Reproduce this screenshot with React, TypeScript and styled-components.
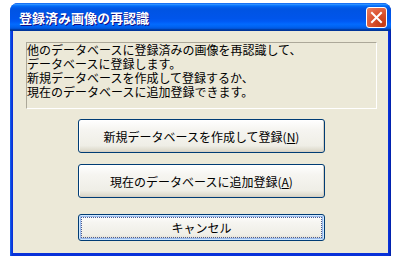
import React from "react";
import styled, { createGlobalStyle } from "styled-components";

const Global = createGlobalStyle`
  html, body { margin: 0; padding: 0; background: #ffffff; }
  body { width: 402px; height: 264px; overflow: hidden; }
`;

const FONT = `"MS UI Gothic", "Noto Sans CJK JP", "Noto Sans", sans-serif`;

const Page = styled.div`
  padding: 3px 0 0 10px;
`;

const Window = styled.div`
  width: 381px;
  height: 253px;
  display: flex;
  flex-direction: column;
  border-radius: 8px 8px 0 0;
  background: linear-gradient(to right, #166aee 0, #0831d9 2px, #0831d9 calc(100% - 2px), #001ea0 100%);
  box-sizing: border-box;
  overflow: hidden;
`;

const TitleBar = styled.div`
  height: 28px;
  flex: none;
  display: flex;
  align-items: center;
  justify-content: space-between;
  padding: 0 4px 0 9px;
  background: linear-gradient(
    to bottom,
    #0058ee 0%,
    #3593ff 4%,
    #288eff 6%,
    #127dff 8%,
    #036ffc 10%,
    #0262ee 14%,
    #0057e5 20%,
    #0054e3 24%,
    #0055eb 56%,
    #005bf5 66%,
    #026afe 76%,
    #0062ef 86%,
    #0052d6 92%,
    #0040ab 94%,
    #003092 100%
  );
`;

const Title = styled.span`
  font-family: ${FONT};
  font-size: 13px;
  font-weight: bold;
  color: #ffffff;
  letter-spacing: 0;
  text-shadow: 1px 1px 0 #0f1089;
  line-height: 1;
  margin-top: 1px;
`;

const CloseButton = styled.div`
  width: 21px;
  height: 21px;
  box-sizing: border-box;
  border: 1px solid #ffffff;
  border-radius: 3px;
  background: radial-gradient(
    circle at 80% 85%,
    #c23a14 0%,
    #d9502c 45%,
    #e46a4a 75%,
    #e98060 100%
  );
  display: flex;
  align-items: center;
  justify-content: center;
  margin-top: 1px;
`;

const Client = styled.div`
  flex: 1;
  margin: 0 3px 3px 3px;
  background: #ece9d8;
  display: flex;
  flex-direction: column;
  align-items: center;
  padding-top: 11px;
`;

const MessageBox = styled.div`
  width: 351px;
  height: 67px;
  box-sizing: border-box;
  border-top: 1px solid #aca899;
  border-left: 1px solid #aca899;
  border-bottom: 1px solid #ffffff;
  border-right: 1px solid #ffffff;
  margin-left: 2px;
  font-family: ${FONT};
  font-size: 12px;
  line-height: 14px;
  color: #000000;
  white-space: pre;
`;

const ButtonStack = styled.div`
  display: flex;
  flex-direction: column;
  align-items: center;
  margin-top: 10px;
  margin-left: 2px;
`;

const Button = styled.div<{ $h: number; $gap: number; $default?: boolean }>`
  width: 247px;
  height: ${(p) => p.$h}px;
  margin-top: ${(p) => p.$gap}px;
  box-sizing: border-box;
  border: 1px solid #003c74;
  border-radius: 3px;
  background: linear-gradient(
    to bottom,
    #ffffff 0%,
    #f6f5f1 30%,
    #efeee6 80%,
    #d8d4c4 100%
  );
  box-shadow: ${(p) =>
    p.$default
      ? "inset 0 0 0 1px #cee7ff, inset 0 0 0 2px #98b8ea"
      : "inset -1px -1px 0 #d6d0c5, inset 1px 1px 0 #fff"};
  display: flex;
  align-items: center;
  justify-content: center;
  font-family: ${FONT};
  font-size: 12px;
  color: #000;
  position: relative;
`;

const FocusRing = styled.div`
  position: absolute;
  inset: 2px;
  border: 1px dotted #4a5a90;
  pointer-events: none;
`;

const Key = styled.span`
  text-decoration: underline;
`;

export default function App() {
  return (
    <>
      <Global />
      <Page>
        <Window>
          <TitleBar>
            <Title>登録済み画像の再認識</Title>
            <CloseButton>
              <svg width="13" height="13" viewBox="0 0 13 13">
                <path
                  d="M2 2 L11 11 M11 2 L2 11"
                  stroke="#ffffff"
                  strokeWidth="2"
                  strokeLinecap="square"
                />
              </svg>
            </CloseButton>
          </TitleBar>
          <Client>
            <MessageBox>
              {"他のデータベースに登録済みの画像を再認識して、\nデータベースに登録します。\n新規データベースを作成して登録するか、\n現在のデータベースに追加登録できます。"}
            </MessageBox>
            <ButtonStack>
              <Button $h={34} $gap={0}>
                新規データベースを作成して登録(<Key>N</Key>)
              </Button>
              <Button $h={34} $gap={11}>
                現在のデータベースに追加登録(<Key>A</Key>)
              </Button>
              <Button $h={27} $gap={16} $default>
                キャンセル
                <FocusRing />
              </Button>
            </ButtonStack>
          </Client>
        </Window>
      </Page>
    </>
  );
}
